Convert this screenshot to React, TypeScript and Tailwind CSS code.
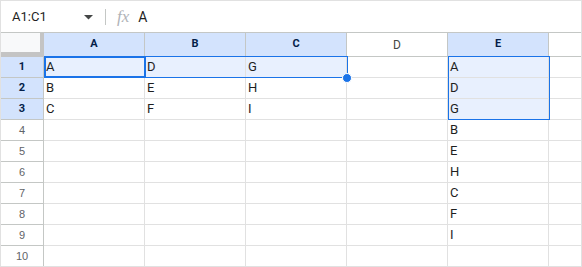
import React from "react";

const COLS = ["A", "B", "C", "D", "E", "F"];
const SEL_COLS = new Set(["A", "B", "C", "E"]);
const DATA: Record<string, string> = {
  A1: "A", B1: "D", C1: "G", E1: "A",
  A2: "B", B2: "E", C2: "H", E2: "D",
  A3: "C", B3: "F", C3: "I", E3: "G",
  E4: "B", E5: "E", E6: "H", E7: "C", E8: "F", E9: "I",
};
const SEL_CELLS = new Set(["A1", "B1", "C1", "E1", "E2", "E3"]);

export default function App() {
  const rows = Array.from({ length: 10 }, (_, i) => i + 1);
  return (
    <div
      className="w-[582px] h-[267px] border border-[#e1e1e1] bg-white overflow-hidden flex flex-col"
      style={{ fontFamily: "Roboto, 'Liberation Sans', sans-serif" }}
    >
      {/* Toolbar */}
      <div className="h-[32px] flex items-center border-b border-[#c4c7c5] shrink-0">
        <div className="w-[104px] flex items-center pl-[11px] pr-[12px] justify-between">
          <span className="text-[13px] text-[#1f1f1f] leading-none">A1:C1</span>
          <svg width="9" height="5" viewBox="0 0 9 5" className="mt-[1px]">
            <path d="M0 0 L9 0 L4.5 4.5 Z" fill="#444746" />
          </svg>
        </div>
        <div className="w-px h-[16px] bg-[#c4c7c5]" />
        <span
          className="ml-[11px] text-[17px] text-[#b0b3b8] italic leading-none"
          style={{ fontFamily: "'Liberation Serif', serif" }}
        >
          fx
        </span>
        <span className="ml-[9px] text-[14px] text-[#1f1f1f] leading-none">A</span>
      </div>

      {/* Grid */}
      <div className="relative flex-1">
        <div className="grid grid-cols-[43px_101px_101px_101px_101px_101px_32px] grid-rows-[24px_repeat(10,21px)]">
          {/* corner */}
          <div className="bg-[#f8f9fa] border-r-[4px] border-b-[5px] border-[#c4c4c4]" />
          {COLS.map((c) => {
            const sel = SEL_COLS.has(c);
            return (
              <div
                key={c}
                className={
                  "flex items-center justify-center border-b border-[#c4c7c5] " +
                  (c === "F" ? "" : "border-r ") +
                  (sel
                    ? "bg-[#d3e3fd] text-[#041e49] font-bold text-[11px]"
                    : "bg-white text-[#444746] text-[12px]")
                }
              >
                {c === "F" ? "" : c}
              </div>
            );
          })}
          {rows.map((r) => (
            <React.Fragment key={r}>
              <div
                className={
                  "flex items-center justify-center border-r border-b border-[#c4c7c5] " +
                  (r <= 3
                    ? "bg-[#d3e3fd] text-[#041e49] font-bold text-[11px]"
                    : "bg-white text-[#5f6368] text-[11px]")
                }
                style={r > 3 ? { fontFamily: "'Liberation Sans', Arial, sans-serif" } : undefined}
              >
                {r}
              </div>
              {COLS.map((c) => {
                const id = c + r;
                const sel = SEL_CELLS.has(id);
                return (
                  <div
                    key={id}
                    className={
                      "flex items-center pl-[2px] border-b border-[#e1e1e1] text-[13px] text-[#1f1f1f] " +
                      (c === "F" ? "" : "border-r ") +
                      (sel ? "bg-[#e8f0fe]" : "bg-white")
                    }
                  >
                    {DATA[id] ?? ""}
                  </div>
                );
              })}
            </React.Fragment>
          ))}
        </div>

        {/* Selection A1:C1 */}
        <div className="absolute left-[43px] top-[23px] w-[304px] h-[22px] border border-[#1a73e8] pointer-events-none" />
        {/* Active cell A1 */}
        <div className="absolute left-[43px] top-[23px] w-[102px] h-[22px] border-2 border-[#1a73e8] pointer-events-none" />
        {/* Fill handle */}
        <div className="absolute left-[341px] top-[40px] w-[10px] h-[10px] rounded-full bg-[#1a73e8] border border-white" />
        {/* Selection E1:E3 */}
        <div className="absolute left-[447px] top-[23px] w-[102px] h-[64px] border border-[#1a73e8] pointer-events-none" />
      </div>
    </div>
  );
}
